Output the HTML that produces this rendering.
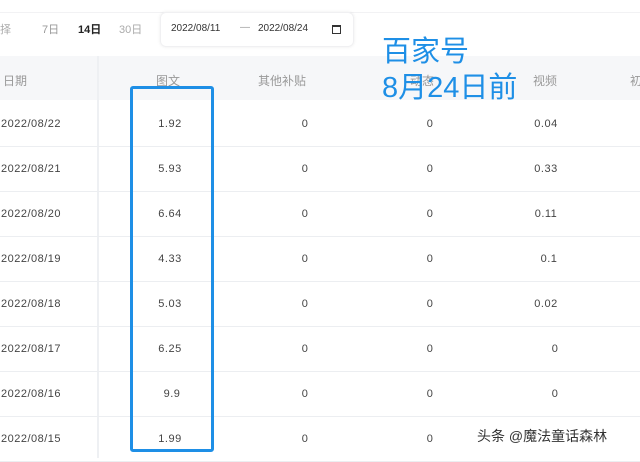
<html><head><style>
body{margin:0;width:640px;height:458px;overflow:hidden;background:#fff;font-family:"Liberation Sans","Noto Sans CJK SC",sans-serif;position:relative}
.a{position:absolute;white-space:nowrap}
.t{font-size:12px;color:#999}
.hd{position:absolute;left:0;top:56px;width:640px;height:44px;background:#f6f7f9}
.row{position:absolute;left:0;width:640px;height:45px;border-bottom:1px solid #eceef1;font-size:11px;color:#444}
.row span{position:absolute;top:17px;transform:translateX(-50%);letter-spacing:.5px}
</style></head><body>
<div class="a" style="left:0;top:0;width:640px;height:12px;background:#fff;border-bottom:1px solid #f2f2f4"></div>
<div class="a t" style="left:0;top:21px;font-size:11px;color:#aaa">择</div>
<div class="a t" style="left:42px;top:21px;font-size:11px;color:#999">7日</div>
<div class="a" style="left:78px;top:21px;font-size:11px;font-weight:bold;color:#222">14日</div>
<div class="a t" style="left:119px;top:21px;font-size:11px;color:#aaa">30日</div>
<div class="a" style="left:160px;top:12px;width:192px;height:33px;border-radius:6px;box-shadow:0 0 3px rgba(0,0,0,.08);border:1px solid #f0f0f2"></div>
<div class="a" style="left:171px;top:23px;font-size:10px;color:#333">2022/08/11</div>
<div class="a" style="left:240px;top:22px;font-size:10px;color:#999">—</div>
<div class="a" style="left:258px;top:23px;font-size:10px;color:#333">2022/08/24</div>
<div class="a" style="left:332px;top:25px;width:7px;height:6px;border:1px solid #333;border-top-width:2px"></div>
<div class="hd"></div>
<div class="a" style="left:97px;top:56px;width:2px;height:402px;background:#eef0f3"></div>
<div class="a t" style="left:3px;top:72px">日期</div>
<div class="a t" style="left:156px;top:72px">图文</div>
<div class="a t" style="left:258px;top:72px">其他补贴</div>
<div class="a t" style="left:410px;top:72px">动态</div>
<div class="a t" style="left:533px;top:72px">视频</div>
<div class="a t" style="left:630px;top:72px">初</div>
<div class="row" style="top:101px"><span style="left:31px">2022/08/22</span><span style="left:170px">1.92</span><span style="left:305px">0</span><span style="left:430px">0</span><span style="left:546px">0.04</span></div>
<div class="row" style="top:146px"><span style="left:31px">2022/08/21</span><span style="left:170px">5.93</span><span style="left:305px">0</span><span style="left:430px">0</span><span style="left:546px">0.33</span></div>
<div class="row" style="top:191px"><span style="left:31px">2022/08/20</span><span style="left:170px">6.64</span><span style="left:305px">0</span><span style="left:430px">0</span><span style="left:546px">0.11</span></div>
<div class="row" style="top:236px"><span style="left:31px">2022/08/19</span><span style="left:170px">4.33</span><span style="left:305px">0</span><span style="left:430px">0</span><span style="left:549px">0.1</span></div>
<div class="row" style="top:281px"><span style="left:31px">2022/08/18</span><span style="left:170px">5.03</span><span style="left:305px">0</span><span style="left:430px">0</span><span style="left:546px">0.02</span></div>
<div class="row" style="top:326px"><span style="left:31px">2022/08/17</span><span style="left:170px">6.25</span><span style="left:305px">0</span><span style="left:430px">0</span><span style="left:555px">0</span></div>
<div class="row" style="top:371px"><span style="left:31px">2022/08/16</span><span style="left:172px">9.9</span><span style="left:305px">0</span><span style="left:430px">0</span><span style="left:555px">0</span></div>
<div class="row" style="top:416px"><span style="left:31px">2022/08/15</span><span style="left:170px">1.99</span><span style="left:305px">0</span><span style="left:430px">0</span></div>
<div class="a" style="left:130px;top:86px;width:78px;height:360px;border:3px solid #1e8fe6;border-radius:3px"></div>
<div class="a" style="left:382px;top:34px;font-size:29px;color:#1e8fe6;line-height:36px">百家号<br>8月24日前</div>
<div class="a" style="left:477px;top:426px;font-size:14px;color:#333">头条 @魔法童话森林</div>
</body></html>
